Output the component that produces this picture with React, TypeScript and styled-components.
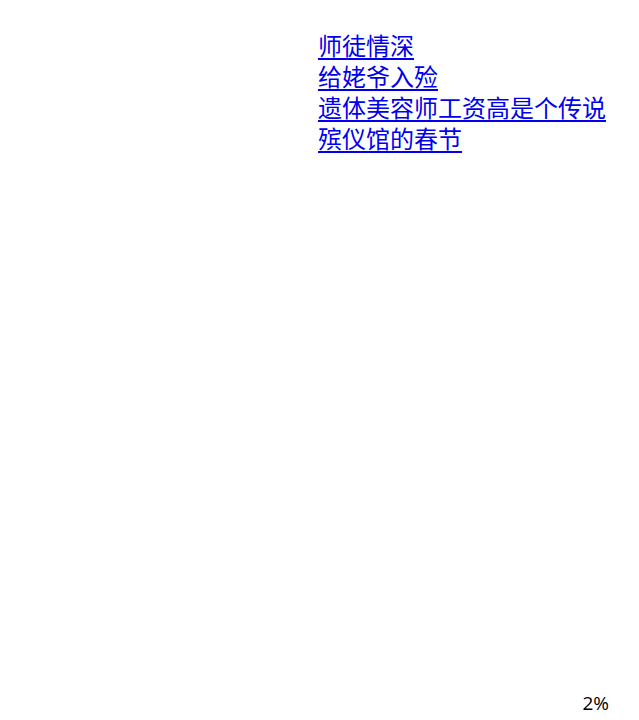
import React from 'react'
import styled, { createGlobalStyle } from 'styled-components'

const GlobalStyle = createGlobalStyle`
  html, body {
    margin: 0;
    padding: 0;
    background: #ffffff;
  }
  body {
    font-family: "Noto Sans CJK SC", "Noto Sans", sans-serif;
  }
`

const Page = styled.div`
  display: flex;
  flex-direction: column;
  min-height: 720px;
  box-sizing: border-box;
  padding: 29px 30px 4px 0;
`

const LinkList = styled.ul`
  list-style: none;
  margin: 0;
  padding: 0 0 0 318px;
`

const Item = styled.li`
  font-size: 24px;
  line-height: 31px;
  height: 31px;
`

const StoryLink = styled.a`
  display: inline-block;
  height: 31px;
  color: #0000ee;
  text-decoration: underline;
  text-underline-offset: 3px;
`

const Progress = styled.div`
  margin-top: auto;
  align-self: flex-end;
  font-family: "Open Sans", "Noto Sans", sans-serif;
  font-size: 19px;
  line-height: 26px;
  color: #000000;
`

const stories = ['师徒情深', '给姥爷入殓', '遗体美容师工资高是个传说', '殡仪馆的春节']

export default function App() {
  return (
    <>
      <GlobalStyle />
      <Page>
        <LinkList>
          {stories.map((title) => (
            <Item key={title}>
              <StoryLink href="#">{title}</StoryLink>
            </Item>
          ))}
        </LinkList>
        <Progress>2%</Progress>
      </Page>
    </>
  )
}
